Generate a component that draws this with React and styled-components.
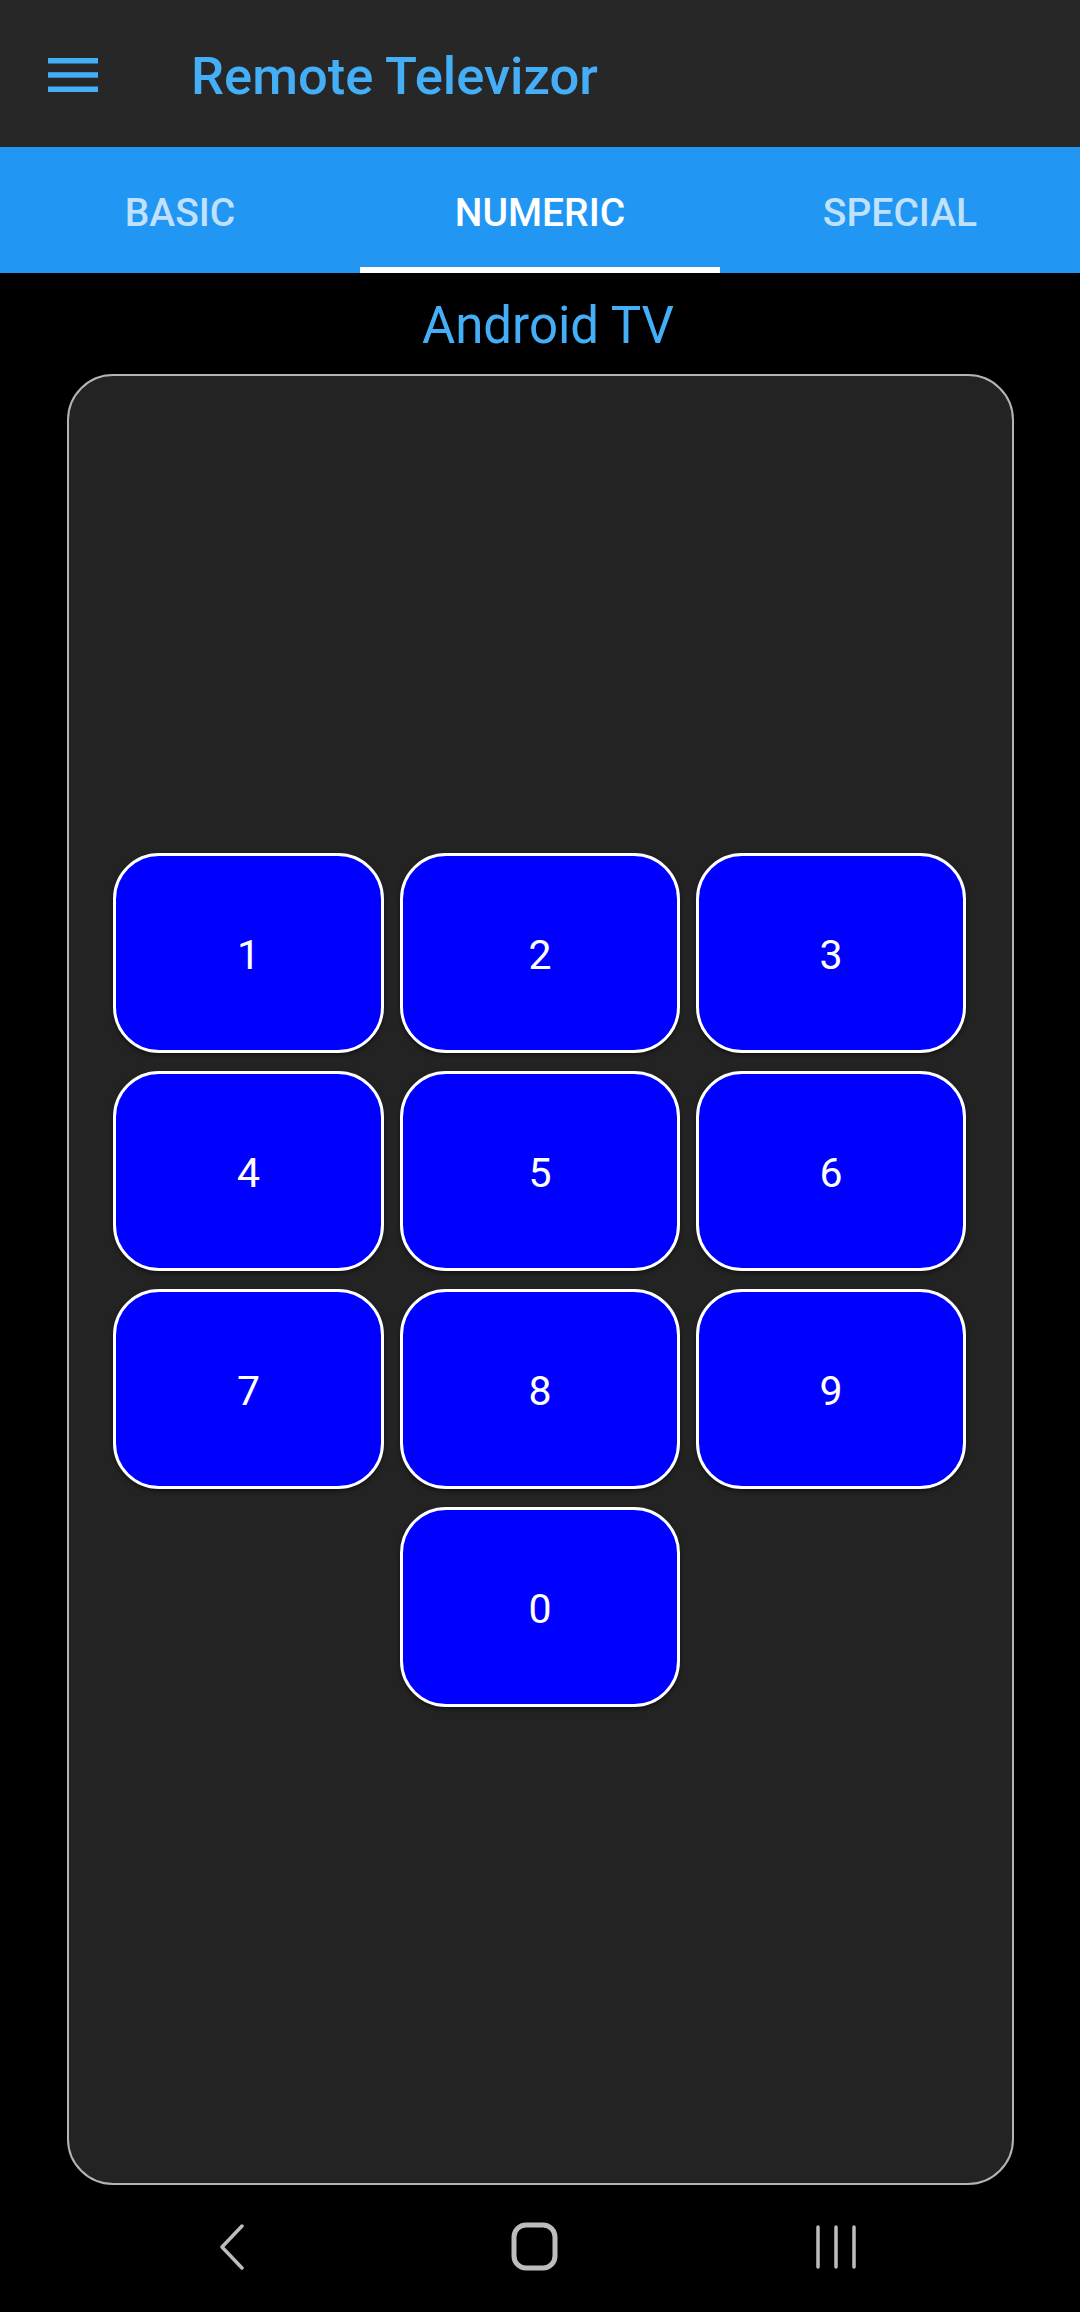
import React, { useState } from 'react';
import styled, { createGlobalStyle } from 'styled-components';

const GlobalStyle = createGlobalStyle`
  html, body {
    margin: 0;
    padding: 0;
    background: #000;
    font-family: Roboto, "Noto Sans", "Liberation Sans", sans-serif;
  }
`;

const TABS = ['BASIC', 'NUMERIC', 'SPECIAL'];
const ROWS = [
  ['1', '2', '3'],
  ['4', '5', '6'],
  ['7', '8', '9'],
  [null, '0', null],
];

const App = () => {
  const [tab, setTab] = useState(1); // NUMERIC is open

  return (
    <Screen>
      <GlobalStyle />
      <Toolbar>
        <MenuIcon width="50" height="34" viewBox="0 0 50 34">
          <rect x="0" y="0" width="50" height="5.5" />
          <rect x="0" y="14.2" width="50" height="5.5" />
          <rect x="0" y="28.5" width="50" height="5.5" />
        </MenuIcon>
        <AppTitle>Remote Televizor</AppTitle>
      </Toolbar>

      <TabBar>
        {TABS.map((name, i) => (
          <Tab key={name} $active={i === tab} onClick={() => setTab(i)}>
            {name}
          </Tab>
        ))}
      </TabBar>

      <DeviceName>Android TV</DeviceName>

      <Panel>
        <Keypad>
          {ROWS.flat().map((key, i) =>
            key === null ? <span key={i} /> : <Key key={i}>{key}</Key>
          )}
        </Keypad>
      </Panel>

      <NavBar>
        <NavCell>
          <svg width="28" height="46" viewBox="0 0 28 46">
            <path d="M24 2 L4 23 L24 44" fill="none" stroke="#bdbdbd" strokeWidth="3.5" strokeLinecap="round" strokeLinejoin="round" />
          </svg>
        </NavCell>
        <NavCell>
          <svg width="48" height="50" viewBox="0 0 48 50">
            <rect x="3" y="3" width="41" height="43" rx="12" fill="none" stroke="#bdbdbd" strokeWidth="5" />
          </svg>
        </NavCell>
        <NavCell>
          <svg width="46" height="46" viewBox="0 0 46 46">
            <g stroke="#bdbdbd" strokeWidth="3.5" strokeLinecap="round">
              <line x1="3" y1="3" x2="3" y2="43" />
              <line x1="21" y1="3" x2="21" y2="43" />
              <line x1="39" y1="3" x2="39" y2="43" />
            </g>
          </svg>
        </NavCell>
      </NavBar>
    </Screen>
  );
};

export default App;

const Screen = styled.div`
  width: 1080px;
  height: 2312px;
  background: #000;
  display: flex;
  flex-direction: column;
  overflow: hidden;
`;

const Toolbar = styled.header`
  height: 147px;
  background: #272727;
  display: flex;
  align-items: center;
  padding-left: 48px;
  gap: 93px;
  flex-shrink: 0;
`;

const MenuIcon = styled.svg`
  fill: #44aef7;
  margin-top: 2px;
`;

const AppTitle = styled.h1`
  margin: 4px 0 0;
  font-size: 52.5px;
  font-weight: 500;
  color: #44aef7;
`;

const TabBar = styled.nav`
  height: 126px;
  background: #2196f3;
  display: grid;
  grid-template-columns: repeat(3, 1fr);
  flex-shrink: 0;
`;

const Tab = styled.div`
  display: flex;
  align-items: center;
  justify-content: center;
  padding-top: 5px;
  font-size: 39px;
  font-weight: 500;
  color: ${(p) => (p.$active ? '#ffffff' : 'rgba(255,255,255,0.72)')};
  box-shadow: ${(p) => (p.$active ? 'inset 0 -6px 0 #ffffff' : 'none')};
  cursor: pointer;
`;

const DeviceName = styled.div`
  text-align: center;
  font-size: 51px;
  line-height: 60px;
  color: #44aef7;
  padding: 23px 0 0 16px;
  margin-bottom: 18px;
`;

const Panel = styled.section`
  box-sizing: border-box;
  margin-left: 67px;
  width: 947px;
  height: 1811px;
  background: #232323;
  border: 2px solid #b4b4b4;
  border-radius: 46px;
  display: flex;
  flex-direction: column;
  justify-content: center;
  padding-left: 44px;
  flex-shrink: 0;
`;

const Keypad = styled.div`
  display: grid;
  grid-template-columns: 271px 280px 270px;
  grid-auto-rows: 200px;
  column-gap: 16px;
  row-gap: 18px;
`;

const Key = styled.button`
  box-sizing: border-box;
  background: #0000ff;
  border: 3px solid #ffffff;
  border-radius: 46px;
  color: #ffffff;
  font-family: Roboto, "Noto Sans", sans-serif;
  font-size: 41px;
  font-weight: 400;
  box-shadow: 0 2px 4px rgba(0, 0, 0, 0.5);
  padding: 5px 0 0;
  cursor: pointer;
`;

const NavBar = styled.footer`
  flex: 1;
  display: flex;
  justify-content: center;
  align-items: center;
  padding: 0 10px 4px 0;
`;

const NavCell = styled.div`
  width: 303px;
  display: flex;
  justify-content: center;
  align-items: center;
`;
